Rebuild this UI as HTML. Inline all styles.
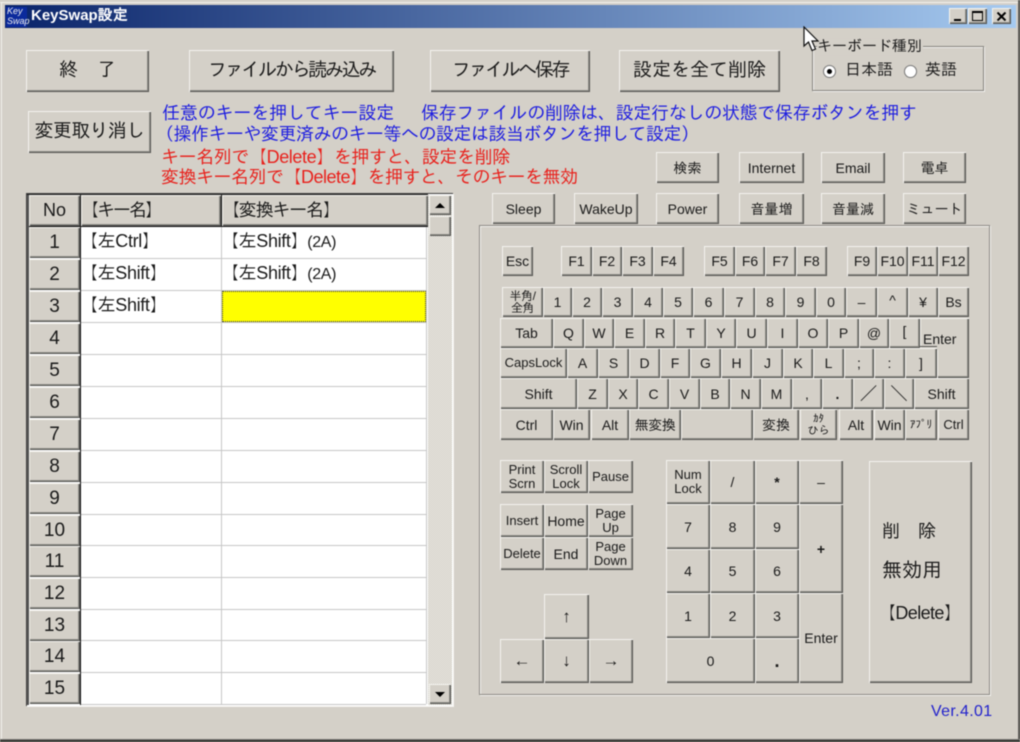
<!DOCTYPE html>
<html lang="ja"><head><meta charset="utf-8"><title>KeySwap設定</title>
<style>
html,body{margin:0;padding:0}
body{width:1020px;height:742px;overflow:hidden;position:relative;background:#d4d0c8;font-family:"Liberation Sans","IPAGothic","Noto Sans CJK JP",sans-serif;color:#1a1a1a}
#w{position:absolute;left:0;top:0;width:1020px;height:742px;filter:blur(.4px)}
#w div,#w span.t{position:absolute;box-sizing:border-box}
.k{display:flex;align-items:center;justify-content:center;text-align:center;font-size:14px;line-height:14px;white-space:nowrap;background:#d4d0c8;box-shadow:inset 1px 1px 0 #f4f3ef,inset -1px -1px 0 #555552,inset -2px -2px 0 #8f8d88}
.tb{font-size:19px}
.s{font-size:14px}
.x{font-size:13px;line-height:14px}
.t{white-space:nowrap}
.f{top:246px;height:30px}.r1{top:287px;height:30px}.r2{top:318px;height:30px}.r3{top:348px;height:30px}.r4{top:378px;height:31px}.r5{top:409px;height:31px}
.h{background:#d4d0c8;box-shadow:inset 1px 1px 0 #f4f3ef,inset -1px -1px 0 #555552,inset -2px -2px 0 #8f8d88;display:flex;align-items:center;justify-content:center}
.n{left:28px;width:52px;height:31px;font-size:19px}
.c{font-size:18px;line-height:22px;letter-spacing:-.35px}
.l{background:#c6c6c6;height:1px;left:81px;width:345px}
</style></head><body><div id="w">
<!-- window frame -->
<div style="left:0;top:0;width:1020px;height:2px;background:#d4d0c8"></div>
<div style="left:0;top:2px;width:1020px;height:1px;background:#f2f1ec"></div>
<div style="left:1px;top:2px;width:1px;height:738px;background:#f2f1ec"></div>
<div style="left:1018px;top:0;width:1px;height:742px;background:#6d6c68"></div>
<div style="left:1019px;top:0;width:1px;height:742px;background:#33332f"></div>
<div style="left:0;top:739px;width:1020px;height:1px;background:#7a7975"></div>
<div style="left:0;top:740px;width:1020px;height:2px;background:#33332f"></div>
<!-- title -->
<div style="left:5px;top:5px;width:1011px;height:23px;background:linear-gradient(90deg,#0a246a 0%,#a6caf0 100%)"></div>
<div style="left:6px;top:7px;width:21px;height:20px;background:#0b2a9c"></div>
<span class="t" style="left:7px;top:6px;color:#eee;font:italic 9px/10px 'Liberation Sans',sans-serif">Key<br>Swap</span>
<span class="t" style="left:31px;top:7px;color:#fff;font-size:15px;line-height:18px;font-weight:700">KeySwap設定</span>
<div class="k" style="left:949px;top:8px;width:18px;height:16px"><div style="left:5px;top:11px;width:7px;height:2px;background:#000"></div></div>
<div class="k" style="left:968px;top:8px;width:19px;height:16px"><div style="left:4px;top:3px;width:11px;height:10px;border:1px solid #000;border-top-width:2px"></div></div>
<div class="k" style="left:992px;top:8px;width:19px;height:16px"><svg width="11" height="9" viewBox="0 0 11 9" style="display:block"><path d="M1.500 .5L9.500 8.500M9.500 .5L1.500 8.500" stroke="#000" stroke-width="2" fill="none"/></svg></div>
<!-- top buttons -->
<div class="k tb" style="left:26px;top:50px;width:123px;height:42px">終　了</div>
<div class="k tb" style="left:189px;top:50px;width:205px;height:42px;letter-spacing:-2.300px">ファイルから読み込み</div>
<div class="k tb" style="left:430px;top:50px;width:160px;height:42px;letter-spacing:-2.400px">ファイルへ保存</div>
<div class="k tb" style="left:619px;top:50px;width:161px;height:42px">設定を全て削除</div>
<div class="k tb" style="left:28px;top:111px;width:123px;height:42px;letter-spacing:-.7px">変更取り消し</div>
<!-- group -->
<div style="left:812px;top:46px;width:172px;height:45px;border:1px solid #85837e;box-shadow:1px 1px 0 #f4f3ef,inset 1px 1px 0 #f4f3ef"></div>
<span class="t" style="left:817px;top:39px;font-size:15px;line-height:16px;background:#d4d0c8;padding-right:1px">キーボード種別</span>
<div style="left:823px;top:65px;width:13px;height:13px;border-radius:50%;background:#fff;border:1px solid #777"></div>
<div style="left:827px;top:69px;width:5px;height:5px;border-radius:50%;background:#000"></div>
<span class="t" style="left:845px;top:62px;font-size:16px;line-height:18px">日本語</span>
<div style="left:904px;top:65px;width:13px;height:13px;border-radius:50%;background:#fff;border:1px solid #777"></div>
<span class="t" style="left:925px;top:62px;font-size:16px;line-height:18px">英語</span>
<!-- info text -->
<span class="t" style="left:162px;top:103px;color:#1c1ce0;font-size:18px;line-height:20px;letter-spacing:-.15px">任意のキーを押してキー設定</span>
<span class="t" style="left:421px;top:103px;color:#1c1ce0;font-size:18px;line-height:20px;letter-spacing:-.3px">保存ファイルの削除は、設定行なしの状態で保存ボタンを押す</span>
<span class="t" style="left:156px;top:124px;color:#1c1ce0;font-size:18px;line-height:20px;letter-spacing:-.5px">（操作キーや変更済みのキー等への設定は該当ボタンを押して設定）</span>
<span class="t" style="left:161px;top:147px;color:#e8211c;font-size:18px;line-height:20px;letter-spacing:-.4px">キー名列で【Delete】を押すと、設定を削除</span>
<span class="t" style="left:161px;top:167px;color:#e8211c;font-size:18px;line-height:20px;letter-spacing:-.5px">変換キー名列で【Delete】を押すと、そのキーを無効</span>
<!-- special keys -->
<div class="k s" style="left:656px;top:152px;width:63px;height:31px">検索</div>
<div class="k s" style="left:739px;top:152px;width:65px;height:31px">Internet</div>
<div class="k s" style="left:821px;top:152px;width:64px;height:31px">Email</div>
<div class="k s" style="left:903px;top:152px;width:63px;height:31px">電卓</div>
<div class="k s" style="left:492px;top:193px;width:63px;height:31px">Sleep</div>
<div class="k s" style="left:574px;top:193px;width:64px;height:31px">WakeUp</div>
<div class="k s" style="left:656px;top:193px;width:63px;height:31px">Power</div>
<div class="k s" style="left:739px;top:193px;width:65px;height:31px">音量増</div>
<div class="k s" style="left:821px;top:193px;width:64px;height:31px">音量減</div>
<div class="k s" style="left:903px;top:193px;width:63px;height:31px">ミュート</div>
<!-- grid -->
<div style="left:26px;top:193px;width:427px;height:513px;background:#fff;box-shadow:inset 1px 1px 0 #404040,1px 1px 0 #f4f3ef"></div>
<div style="left:27px;top:194px;width:2px;height:511px;background:#555"></div>
<div class="h n" style="top:195px;left:29px;width:51px;font-size:18px">No</div>
<div class="h" style="left:81px;top:195px;width:140px;height:31px;justify-content:flex-start;font-size:18px;letter-spacing:-2px">【キー名】</div>
<div class="h" style="left:222px;top:195px;width:206px;height:31px;justify-content:flex-start;font-size:18px;letter-spacing:-1.200px">【変換キー名】</div>
<div style="left:80px;top:194px;width:1px;height:511px;background:#111"></div>
<div style="left:221px;top:194px;width:1px;height:32px;background:#111"></div>
<div style="left:27px;top:194px;width:401px;height:1px;background:#222"></div>
<div style="left:29px;top:226px;width:399px;height:1px;background:#111"></div>
<div style="left:221px;top:227px;width:1px;height:477px;background:#c6c6c6"></div>
<div style="left:426px;top:227px;width:1px;height:477px;background:#c6c6c6"></div>
<div class="l" style="top:258px"></div><div class="l" style="top:290px"></div><div class="l" style="top:322px"></div><div class="l" style="top:354px"></div><div class="l" style="top:386px"></div><div class="l" style="top:418px"></div><div class="l" style="top:450px"></div><div class="l" style="top:482px"></div><div class="l" style="top:514px"></div><div class="l" style="top:545px"></div><div class="l" style="top:577px"></div><div class="l" style="top:609px"></div><div class="l" style="top:640px"></div><div class="l" style="top:672px"></div><div class="l" style="top:704px"></div>
<div class="h n" style="top:227px;left:29px;width:51px">1</div>
<div class="h n" style="top:259px;left:29px;width:51px">2</div>
<div class="h n" style="top:291px;left:29px;width:51px">3</div>
<div class="h n" style="top:323px;left:29px;width:51px">4</div>
<div class="h n" style="top:355px;left:29px;width:51px">5</div>
<div class="h n" style="top:387px;left:29px;width:51px">6</div>
<div class="h n" style="top:419px;left:29px;width:51px">7</div>
<div class="h n" style="top:451px;left:29px;width:51px">8</div>
<div class="h n" style="top:483px;left:29px;width:51px">9</div>
<div class="h n" style="top:515px;left:29px;width:51px">10</div>
<div class="h n" style="top:546px;left:29px;width:51px">11</div>
<div class="h n" style="top:578px;left:29px;width:51px">12</div>
<div class="h n" style="top:610px;left:29px;width:51px">13</div>
<div class="h n" style="top:641px;left:29px;width:51px">14</div>
<div class="h n" style="top:673px;left:29px;width:51px">15</div>
<span class="t c" style="left:80px;top:230px">【左Ctrl】</span>
<span class="t c" style="left:80px;top:262px">【左Shift】</span>
<span class="t c" style="left:80px;top:294px">【左Shift】</span>
<span class="t c" style="left:221px;top:230px">【左Shift】<span style="font-size:16px;margin-left:-1px">(2A)</span></span>
<span class="t c" style="left:221px;top:262px">【左Shift】<span style="font-size:16px;margin-left:-1px">(2A)</span></span>
<div style="left:222px;top:291px;width:204px;height:31px;background:#ffff00;border:1px dotted #333"></div>
<!-- scrollbar -->
<div style="left:428px;top:195px;width:24px;height:510px;background:repeating-conic-gradient(#eeece6 0 25%,#cfccc4 0 50%) 0 0/2px 2px"></div>
<div class="k" style="left:429px;top:195px;width:22px;height:20px"></div>
<div style="left:435px;top:203px;width:0;height:0;border-left:5px solid transparent;border-right:5px solid transparent;border-bottom:5px solid #000"></div>
<div class="k" style="left:429px;top:216px;width:22px;height:20px"></div>
<div class="k" style="left:429px;top:684px;width:22px;height:20px"></div>
<div style="left:435px;top:692px;width:0;height:0;border-left:5px solid transparent;border-right:5px solid transparent;border-top:5px solid #000"></div>
<!-- keyboard panel -->
<div style="left:479px;top:225px;width:511px;height:470px;border:1px solid #8c8a85;box-shadow:1px 1px 0 #f4f3ef,inset 1px 1px 0 #f4f3ef"></div>
<!-- function row -->
<div class="k f" style="left:502px;width:31px">Esc</div>
<div class="k f" style="left:561px;width:31px">F1</div><div class="k f" style="left:592px;width:30px">F2</div><div class="k f" style="left:622px;width:31px">F3</div><div class="k f" style="left:653px;width:31px">F4</div>
<div class="k f" style="left:704px;width:31px">F5</div><div class="k f" style="left:735px;width:30px">F6</div><div class="k f" style="left:765px;width:31px">F7</div><div class="k f" style="left:796px;width:31px">F8</div>
<div class="k f" style="left:847px;width:30px">F9</div><div class="k f" style="left:877px;width:31px">F10</div><div class="k f" style="left:908px;width:30px">F11</div><div class="k f" style="left:938px;width:31px">F12</div>
<!-- row 1 -->
<div class="k r1 x" style="left:502px;width:41px;font-size:12px;line-height:12px;letter-spacing:-.5px">半角/<br>全角</div>
<div class="k r1" style="left:543px;width:29px">1</div><div class="k r1" style="left:572px;width:30px">2</div><div class="k r1" style="left:602px;width:31px">3</div><div class="k r1" style="left:633px;width:30px">4</div><div class="k r1" style="left:663px;width:30px">5</div><div class="k r1" style="left:693px;width:31px">6</div><div class="k r1" style="left:724px;width:31px">7</div><div class="k r1" style="left:755px;width:30px">8</div><div class="k r1" style="left:785px;width:31px">9</div><div class="k r1" style="left:816px;width:30px">0</div><div class="k r1" style="left:846px;width:31px">–</div><div class="k r1" style="left:877px;width:31px;padding-bottom:5px">^</div><div class="k r1" style="left:908px;width:30px">¥</div><div class="k r1" style="left:938px;width:31px">Bs</div>
<!-- row 2 -->
<div class="k r2" style="left:500px;width:53px">Tab</div>
<div class="k r2" style="left:553px;width:31px">Q</div><div class="k r2" style="left:584px;width:30px">W</div><div class="k r2" style="left:614px;width:31px">E</div><div class="k r2" style="left:645px;width:30px">R</div><div class="k r2" style="left:675px;width:31px">T</div><div class="k r2" style="left:706px;width:30px">Y</div><div class="k r2" style="left:736px;width:31px">U</div><div class="k r2" style="left:767px;width:31px">I</div><div class="k r2" style="left:798px;width:30px">O</div><div class="k r2" style="left:828px;width:31px">P</div><div class="k r2" style="left:859px;width:30px">@</div><div class="k r2" style="left:889px;width:31px;padding-bottom:4px">[</div>
<!-- enter -->
<div class="h" style="left:937px;top:330px;width:32px;height:48px"></div>
<div class="k r2" style="left:920px;width:49px;box-shadow:inset 1px 1px 0 #f4f3ef,inset -1px 0 0 #555552,inset -2px 0 0 #8f8d88"></div>
<div style="left:937px;top:346px;width:30px;height:4px;background:#d4d0c8"></div>
<div style="left:920px;top:346px;width:17px;height:1px;background:#555552"></div>
<span class="t" style="left:923px;top:332px;font-size:14px;line-height:14px">Enter</span>
<!-- row 3 -->
<div class="k r3 x" style="left:500px;width:67px;font-size:13px">CapsLock</div>
<div class="k r3" style="left:567px;width:31px">A</div><div class="k r3" style="left:598px;width:31px">S</div><div class="k r3" style="left:629px;width:31px">D</div><div class="k r3" style="left:660px;width:30px">F</div><div class="k r3" style="left:690px;width:31px">G</div><div class="k r3" style="left:721px;width:31px">H</div><div class="k r3" style="left:752px;width:31px">J</div><div class="k r3" style="left:783px;width:30px">K</div><div class="k r3" style="left:813px;width:31px">L</div><div class="k r3" style="left:844px;width:30px">;</div><div class="k r3" style="left:874px;width:31px">:</div><div class="k r3" style="left:905px;width:32px">]</div>
<!-- row 4 -->
<div class="k r4" style="left:500px;width:77px">Shift</div>
<div class="k r4" style="left:577px;width:31px">Z</div><div class="k r4" style="left:608px;width:30px">X</div><div class="k r4" style="left:638px;width:31px">C</div><div class="k r4" style="left:669px;width:31px">V</div><div class="k r4" style="left:700px;width:30px">B</div><div class="k r4" style="left:730px;width:31px">N</div><div class="k r4" style="left:761px;width:31px">M</div><div class="k r4" style="left:792px;width:30px">,</div><div class="k r4" style="left:822px;width:31px;font-weight:700">.</div><div class="k r4" style="left:853px;width:31px;font-size:18px">／</div><div class="k r4" style="left:884px;width:30px;font-size:18px">＼</div><div class="k r4" style="left:914px;width:55px">Shift</div>
<!-- row 5 -->
<div class="k r5" style="left:500px;width:53px">Ctrl</div>
<div class="k r5" style="left:553px;width:37px">Win</div><div class="k r5" style="left:591px;width:38px">Alt</div><div class="k r5" style="left:629px;width:52px;letter-spacing:-.5px">無変換</div><div class="k r5" style="left:681px;width:72px"></div><div class="k r5" style="left:753px;width:46px">変換</div>
<div class="k r5 x" style="left:800px;width:37px;font-size:11px;line-height:12px">ｶﾀ<br>ひら</div>
<div class="k r5" style="left:839px;width:34px">Alt</div><div class="k r5" style="left:874px;width:31px">Win</div><div class="k r5 x" style="left:905px;width:32px;font-size:11px">ｱﾌﾟﾘ</div><div class="k r5" style="left:938px;width:31px;font-size:13px">Ctrl</div>
<!-- nav cluster -->
<div class="k x" style="left:500px;top:460px;width:44px;height:33px">Print<br>Scrn</div>
<div class="k x" style="left:544px;top:460px;width:44px;height:33px">Scroll<br>Lock</div>
<div class="k x" style="left:588px;top:460px;width:45px;height:33px">Pause</div>
<div class="k x" style="left:500px;top:504px;width:44px;height:33px">Insert</div>
<div class="k" style="left:544px;top:504px;width:44px;height:33px">Home</div>
<div class="k x" style="left:588px;top:504px;width:45px;height:33px">Page<br>Up</div>
<div class="k x" style="left:500px;top:537px;width:44px;height:33px">Delete</div>
<div class="k" style="left:544px;top:537px;width:44px;height:33px">End</div>
<div class="k x" style="left:588px;top:537px;width:45px;height:33px">Page<br>Down</div>
<!-- arrows -->
<div class="k" style="left:544px;top:594px;width:45px;height:45px;font-size:17px">↑</div>
<div class="k" style="left:500px;top:639px;width:44px;height:44px;font-size:17px">←</div>
<div class="k" style="left:544px;top:639px;width:45px;height:44px;font-size:17px">↓</div>
<div class="k" style="left:589px;top:639px;width:44px;height:44px;font-size:17px">→</div>
<!-- numpad -->
<div class="k x" style="left:666px;top:460px;width:44px;height:44px">Num<br>Lock</div>
<div class="k" style="left:710px;top:460px;width:45px;height:44px">/</div>
<div class="k" style="left:755px;top:460px;width:44px;height:44px;font-weight:700">*</div>
<div class="k" style="left:799px;top:460px;width:44px;height:44px">–</div>
<div class="k" style="left:666px;top:504px;width:44px;height:45px">7</div>
<div class="k" style="left:710px;top:504px;width:45px;height:45px">8</div>
<div class="k" style="left:755px;top:504px;width:44px;height:45px">9</div>
<div class="k" style="left:799px;top:504px;width:44px;height:89px;font-weight:700">+</div>
<div class="k" style="left:666px;top:549px;width:44px;height:44px">4</div>
<div class="k" style="left:710px;top:549px;width:45px;height:44px">5</div>
<div class="k" style="left:755px;top:549px;width:44px;height:44px">6</div>
<div class="k" style="left:666px;top:593px;width:44px;height:45px">1</div>
<div class="k" style="left:710px;top:593px;width:45px;height:45px">2</div>
<div class="k" style="left:755px;top:593px;width:44px;height:45px">3</div>
<div class="k" style="left:799px;top:593px;width:44px;height:90px">Enter</div>
<div class="k" style="left:666px;top:638px;width:89px;height:45px">0</div>
<div class="k" style="left:755px;top:638px;width:44px;height:45px;font-size:18px;font-weight:700">.</div>
<!-- delete key -->
<div class="k" style="left:869px;top:461px;width:103px;height:222px"></div>
<span class="t" style="left:882px;top:521px;font-size:18px;line-height:20px">削　除</span>
<span class="t" style="left:882px;top:561px;font-size:20px;line-height:20px">無効用</span>
<span class="t" style="left:878px;top:602px;font-size:18px;line-height:22px;letter-spacing:-.6px">【Delete】</span>
<!-- version -->
<span class="t" style="left:931px;top:702px;color:#2222cc;font-size:16px;line-height:20px;letter-spacing:.35px">Ver.4.01</span>
<!-- cursor -->
<svg style="position:absolute;left:803px;top:26px" width="20" height="28" viewBox="0 0 20 28"><path d="M1 1V20L5.500 16 9 24.500 12.500 23 9 15H15Z" fill="#fff" stroke="#111" stroke-width="1.200"/></svg>
</div></body></html>
